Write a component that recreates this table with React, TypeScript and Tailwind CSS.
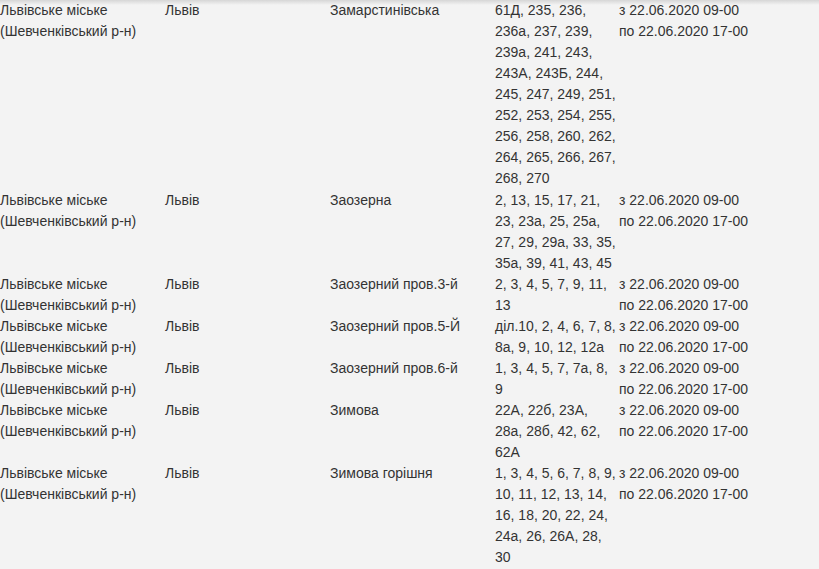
import React from "react";

const rows: [string, string, string][] = [
  ["Львів", "Замарстинівська", "61Д, 235, 236, 236а, 237, 239, 239а, 241, 243, 243А, 243Б, 244, 245, 247, 249, 251, 252, 253, 254, 255, 256, 258, 260, 262, 264, 265, 266, 267, 268, 270"],
  ["Львів", "Заозерна", "2, 13, 15, 17, 21, 23, 23а, 25, 25а, 27, 29, 29а, 33, 35, 35а, 39, 41, 43, 45"],
  ["Львів", "Заозерний пров.3-й", "2, 3, 4, 5, 7, 9, 11, 13"],
  ["Львів", "Заозерний пров.5-Й", "діл.10, 2, 4, 6, 7, 8, 8а, 9, 10, 12, 12а"],
  ["Львів", "Заозерний пров.6-й", "1, 3, 4, 5, 7, 7а, 8, 9"],
  ["Львів", "Зимова", "22А, 22б, 23А, 28а, 28б, 42, 62, 62А"],
  ["Львів", "Зимова горішня", "1, 3, 4, 5, 6, 7, 8, 9, 10, 11, 12, 13, 14, 16, 18, 20, 22, 24, 24а, 26, 26А, 28, 30"],
];

export default function App() {
  return (
    <div
      className="relative w-[819px] h-[569px] overflow-hidden bg-[#f3f3f3] text-[#333333] text-[14px] leading-[21px]"
      style={{ fontFamily: '"Liberation Sans", Arial, sans-serif' }}
    >
      <table className="border-collapse table-fixed w-[819px]">
        <colgroup>
          <col className="w-[165px]" />
          <col className="w-[165px]" />
          <col className="w-[165px]" />
          <col className="w-[124px]" />
          <col />
        </colgroup>
        <tbody>
          {rows.map((r, i) => (
            <tr key={i} className="align-top">
              <td className="p-0">
                Львівське міське
                <br />
                (Шевченківський р-н)
              </td>
              <td className="p-0">{r[0]}</td>
              <td className="p-0">{r[1]}</td>
              <td className={i === 0 ? "p-0 pr-[2.5px] pb-[1px]" : "p-0 pr-[2.5px]"}>{r[2]}</td>
              <td className="p-0">
                з 22.06.2020 09-00
                <br />
                по 22.06.2020 17-00
              </td>
            </tr>
          ))}
        </tbody>
      </table>
      <div className="absolute left-0 right-0 top-0 h-[5px] bg-gradient-to-b from-[#d6d6d6] to-[#f3f3f3]/0" />
    </div>
  );
}
